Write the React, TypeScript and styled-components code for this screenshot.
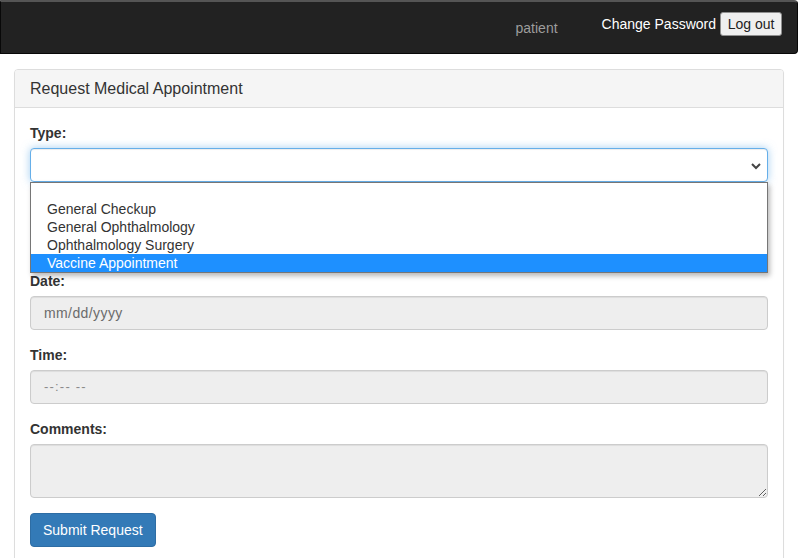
import React from "react";
import styled, { createGlobalStyle } from "styled-components";

const GlobalStyle = createGlobalStyle`
  html, body {
    margin: 0;
    padding: 0;
    background: #fff;
    overflow: hidden;
  }
  body {
    font-family: "Liberation Sans", Arial, Helvetica, sans-serif;
    font-size: 14px;
    line-height: 1.42857;
    color: #333;
  }
  * { box-sizing: border-box; }
`;

const Navbar = styled.nav`
  height: 54px;
  background: #222;
  border: 1px solid #080808;
  border-top: 2px solid #555;
  border-radius: 0 4px 4px 0;
  display: flex;
  justify-content: flex-end;
  align-items: flex-start;
  padding: 10px 14px 0 0;
`;

const NavUser = styled.span`
  color: #9d9d9d;
  font-size: 14px;
  line-height: 16px;
  margin-top: 8px;
  margin-right: 44px;
`;

const NavLink = styled.a`
  color: #fff;
  font-size: 14px;
  line-height: 16px;
  margin-top: 4px;
  margin-right: 4px;
  text-decoration: none;
  cursor: pointer;
`;

const NavButton = styled.button`
  font-family: "Liberation Sans", Arial, sans-serif;
  font-size: 14px;
  line-height: 16px;
  height: 24px;
  width: 62px;
  margin-right: 1px;
  padding: 3px 0;
  text-align: center;
  color: #222;
  background: #efefef;
  border: 1px solid #8f8f8f;
  border-radius: 3px;
`;

const Container = styled.main`
  padding: 15px 14px 0 14px;
`;

const Panel = styled.section`
  border: 1px solid #ddd;
  border-radius: 4px;
  background: #fff;
  box-shadow: 0 1px 1px rgba(0, 0, 0, 0.05);
`;

const PanelHeading = styled.h3`
  margin: 0;
  padding: 10px 15px;
  font-size: 16px;
  font-weight: normal;
  line-height: 17px;
  color: #333;
  background: #f5f5f5;
  border-bottom: 1px solid #ddd;
  border-radius: 3px 3px 0 0;
`;

const PanelBody = styled.form`
  padding: 15px 15px 20px;
  display: flex;
  flex-direction: column;
  gap: 15px;
`;

const Group = styled.div`
  display: flex;
  flex-direction: column;
`;

const Label = styled.label<{ $hidden?: boolean }>`
  display: block;
  font-weight: bold;
  line-height: 20px;
  height: 20px;
  margin-bottom: 5px;
  visibility: ${(p) => (p.$hidden ? "hidden" : "visible")};
`;

const SelectWrap = styled.div`
  position: relative;
`;

const SelectBox = styled.div`
  height: 34px;
  border: 1px solid #66afe9;
  border-radius: 4px;
  background: #fff;
  box-shadow: inset 0 1px 1px rgba(0, 0, 0, 0.075), 0 0 8px rgba(102, 175, 233, 0.6);
  display: flex;
  align-items: center;
  justify-content: flex-end;
  padding: 0 5px 0 12px;
`;

const Chevron = styled.svg`
  width: 12px;
  height: 12px;
  margin-top: 2px;
`;

const Popup = styled.ul`
  position: absolute;
  top: 100%;
  left: 0;
  right: 0;
  margin: 0;
  padding: 0;
  list-style: none;
  background: #fff;
  border: 1px solid #767676;
  box-shadow: 2px 3px 5px rgba(0, 0, 0, 0.28);
  z-index: 10;
`;

const Option = styled.li<{ $selected?: boolean; $short?: boolean }>`
  height: ${(p) => (p.$short ? 17 : 18)}px;
  line-height: 18px;
  padding-left: 16px;
  font-size: 14px;
  color: ${(p) => (p.$selected ? "#fff" : "#333")};
  background: ${(p) => (p.$selected ? "#1e90ff" : "transparent")};
  white-space: nowrap;
`;

const Field = styled.div<{ $dim?: boolean }>`
  height: 34px;
  padding: 6px 12px 6px 13px;
  line-height: 20px;
  border: 1px solid #ccc;
  border-radius: 4px;
  background: #eee;
  color: ${(p) => (p.$dim ? "#8a8a8a" : "#6b6b6b")};
  font-size: ${(p) => (p.$dim ? "13px" : "14px")};
  letter-spacing: ${(p) => (p.$dim ? "1.2px" : "0.4px")};
  box-shadow: inset 0 1px 1px rgba(0, 0, 0, 0.075);
`;

const TextArea = styled.textarea`
  display: block;
  width: 100%;
  height: 54px;
  padding: 6px 12px;
  font-family: inherit;
  font-size: 14px;
  line-height: 20px;
  border: 1px solid #ccc;
  border-radius: 4px;
  background: #eee;
  color: #555;
  box-shadow: inset 0 1px 1px rgba(0, 0, 0, 0.075);
  resize: vertical;
  outline: none;
`;

const Submit = styled.button`
  align-self: flex-start;
  font-family: inherit;
  font-size: 14px;
  line-height: 20px;
  padding: 6px 12px;
  color: #fff;
  background: #337ab7;
  border: 1px solid #2e6da4;
  border-radius: 4px;
  cursor: pointer;
`;

const options = [
  "",
  "General Checkup",
  "General Ophthalmology",
  "Ophthalmology Surgery",
  "Vaccine Appointment",
];

export default function App() {
  return (
    <>
      <GlobalStyle />
      <Navbar>
        <NavUser>patient</NavUser>
        <NavLink>Change Password</NavLink>
        <NavButton type="button">Log out</NavButton>
      </Navbar>
      <Container>
        <Panel>
          <PanelHeading>Request Medical Appointment</PanelHeading>
          <PanelBody onSubmit={(e) => e.preventDefault()}>
            <Group>
              <Label>Type:</Label>
              <SelectWrap>
                <SelectBox>
                  <Chevron viewBox="0 0 12 12">
                    <path d="M2 4 L6 8 L10 4" fill="none" stroke="#444" strokeWidth="2" />
                  </Chevron>
                </SelectBox>
                <Popup>
                  {options.map((o, i) => (
                    <Option key={i} $short={i === 0} $selected={i === options.length - 1}>
                      {o}
                    </Option>
                  ))}
                </Popup>
              </SelectWrap>
            </Group>
            <Group aria-hidden="true">
              <Label $hidden />
              <Field />
            </Group>
            <Group>
              <Label>Date:</Label>
              <Field>mm/dd/yyyy</Field>
            </Group>
            <Group>
              <Label>Time:</Label>
              <Field $dim>--:-- --</Field>
            </Group>
            <Group>
              <Label>Comments:</Label>
              <TextArea rows={2} readOnly />
            </Group>
            <Submit type="submit">Submit Request</Submit>
          </PanelBody>
        </Panel>
      </Container>
    </>
  );
}
